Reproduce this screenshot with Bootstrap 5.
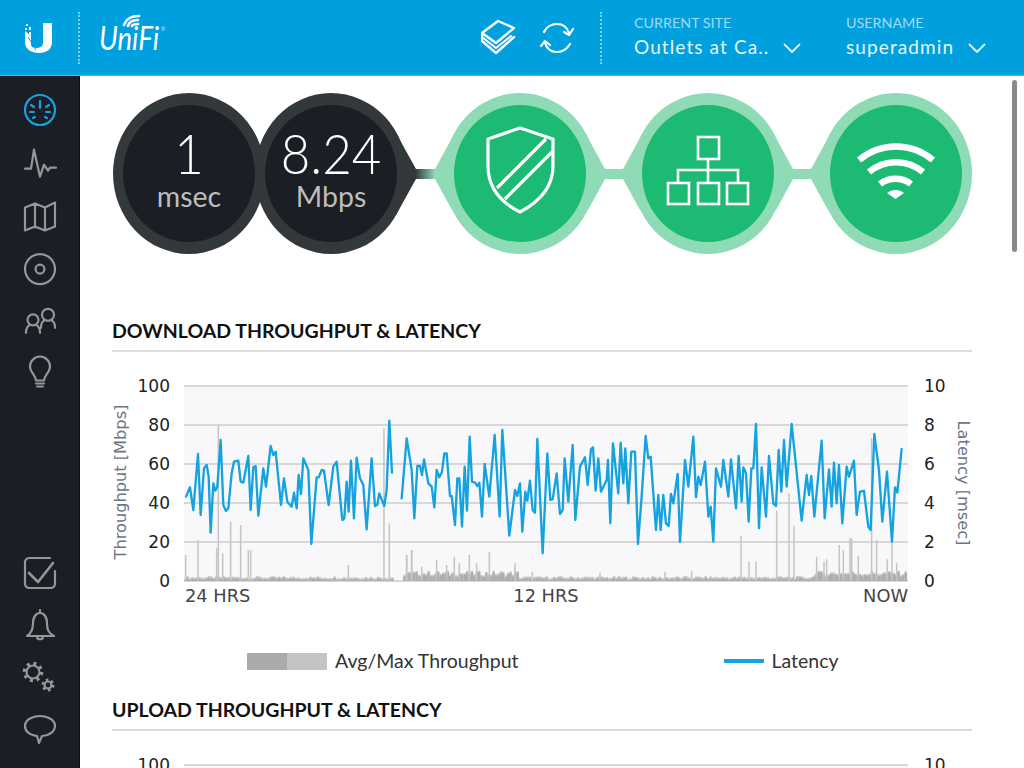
<!DOCTYPE html>
<html lang="en">
<head>
    <meta charset="UTF-8">
    <meta name="viewport" content="width=device-width, initial-scale=1.0">
    <title>UniFi Dashboard</title>
    <link href="https://cdn.jsdelivr.net/npm/bootstrap@5.3.0/dist/css/bootstrap.min.css" rel="stylesheet">
    <style>
        body { font-family: "Lato", sans-serif; color: #333; overflow: hidden; }
        .top-bar { height: 76px; background: #00a0df; border-bottom: 1px solid #4dbdea; }
        .dot-line { width: 0; height: 52px; border-left: 2px dotted #7fcfef; }
        .site-pick { color: #e3f5fc; line-height: 1; margin-bottom: 3px; }
        .site-pick .cap { font-size: 14.3px; color: #9fdaf4; margin-bottom: 6px; }
        .site-pick .val { font-size: 19px; letter-spacing: 1.1px; }
        .site-pick svg { margin-bottom: 3px; }
        .side-bar { width: 80px; background: #1b1e24; border-right: 1px solid #0b0c0f; padding: 8px 0 12px; }
        .side-item { height: 52.3px; }
        .side-item svg { width: 80px; height: 52px; fill: none; stroke: #8f9a98; stroke-width: 2.2; stroke-linecap: round; stroke-linejoin: round; }
        .main-pane { padding: 17px 52px 0 32px; }
        .status-row { height: 161px; }
        .status-bg { position: absolute; left: 0; top: 0; }
        .status-node { width: 152px; height: 161px; flex: none; border: 11px solid; border-width: 12px 10px; border-radius: 50%; position: relative; }
        .node-dark { background: #1b1e24; border-color: #33383b; color: #fff; line-height: 1; padding-bottom: 6.5px; }
        .node-green { background: #1cba72; border-color: #8fdbb6; }
        .node-green svg { fill: none; stroke: #fff; }
        .node-num { font-size: 51px; font-weight: 300; line-height: .9; margin-bottom: 6.5px; transform: scaleY(1.08); }
        .node-unit { font-size: 28.5px; color: #bdbdbd; font-weight: 400; }
        .sec-title { font-size: 19.5px; font-weight: 700; color: #111; line-height: 22px; margin: 0; padding-bottom: 8px; border-bottom: 2px solid #ddd; }
        .chart-box { display: block; margin-top: 18px; overflow: visible; }
        .legend-row { height: 20px; margin-top: 41px; font-size: 19.500px; color: #333; }
        .swatch-avg { width: 40px; height: 17px; background: #aaa; }
        .swatch-max { width: 40px; height: 17px; background: #c4c4c4; }
        .swatch-line { width: 40px; height: 4px; background: #15a3e0; }
        .ax { font-family: "DejaVu Sans", sans-serif; font-size: 17px; fill: #222; }
        .ax-x { font-family: "DejaVu Sans", sans-serif; font-size: 17.8px; fill: #444; }
        .ax-title { font-family: "DejaVu Sans", sans-serif; font-size: 16.2px; fill: #6d7488; }
        .scroll-thumb { position: absolute; right: 7px; top: 4px; width: 5px; height: 172px; background: #8a8a8a; border-radius: 3px; }
    </style>
</head>
<body>
<div class="d-flex flex-column vh-100 overflow-hidden">

    <header class="top-bar d-flex align-items-center flex-shrink-0">
        <div class="d-flex justify-content-center flex-shrink-0" style="width:78px">
            <svg width="32" height="34" viewBox="24 21 32 34">
                <path fill="#fff" d="M44 23h9v19c0 7-5 11-13 11s-14-4-14-11V31l6 5v7c0 2 0 3 1 4 6 2 11 1 11-5z"/>
                <path fill="none" stroke="#00a0df" d="M29 37l8 13"/>
                <g fill="#fff"><rect x="27" y="24" width="2" height="2"/><rect x="30" y="27" width="2" height="3"/><rect x="26" y="28" width="2" height="2"/><rect x="30" y="32" width="2" height="3"/></g>
            </svg>
        </div>
        <div class="dot-line"></div>
        <svg width="80" height="50" viewBox="95 12 80 50" class="ms-3 flex-shrink-0">
            <text x="98" y="49" font-family="Lato, sans-serif" font-style="italic" font-weight="400" font-size="32" fill="#fff" textLength="60" lengthAdjust="spacingAndGlyphs">UniFi</text>
            <g fill="none" stroke="#fff" stroke-width="2.6" stroke-linecap="round">
                <path d="M123 24c2-6 7-9 15-9"/><path d="M127 25c1-4 5-6 10-6"/><path d="M131 25c1-2 3-2 6-2"/>
            </g>
            <text x="160" y="30" font-family="Lato, sans-serif" font-size="5" fill="#cdeefb">®</text>
        </svg>

        <div class="d-flex align-items-center ms-auto">
            <svg width="38" height="38" viewBox="480 21 38 38" fill="none" stroke="#fff" stroke-width="2.4" stroke-linejoin="round" stroke-linecap="round">
                <path d="M481 35l16-12 16 7-18 15z"/><path d="M481 35v8l14 12 18-16"/><path stroke-width="2" d="M481 39l14 11 15-12"/>
            </svg>
            <svg style="margin-left:19px" width="38" height="34" viewBox="540 23 38 34" fill="none" stroke="#fff" stroke-width="2.2" stroke-linecap="round" stroke-linejoin="round">
                <path d="M546 34c3-6 8-8 13-8 6 0 10 3 12 9"/><path d="M566 34l5 3 4-6"/>
                <path d="M572 46c-3 5-8 8-13 8-6 0-10-3-12-9"/><path d="M552 47l-5-4-4 5"/>
            </svg>
            <div class="dot-line ms-4"></div>
            <div class="site-pick ms-4 ps-2 d-flex align-items-end">
                <div style="width:149px"><div class="cap">CURRENT SITE</div><div class="val">Outlets at Ca..</div></div>
                <svg width="18" height="10" viewBox="0 0 18 10" fill="none" stroke="#e3f5fc" stroke-width="1.8"><path d="M1 1l8 8 8-8"/></svg>
            </div>
            <div class="site-pick d-flex align-items-end" style="margin-left:45px;margin-right:38px">
                <div style="width:122px"><div class="cap">USERNAME</div><div class="val">superadmin</div></div>
                <svg width="18" height="10" viewBox="0 0 18 10" fill="none" stroke="#e3f5fc" stroke-width="1.8"><path d="M1 1l8 8 8-8"/></svg>
            </div>
        </div>
    </header>

    <div class="d-flex flex-grow-1 overflow-hidden">
        <aside class="side-bar d-flex flex-column justify-content-between flex-shrink-0">
            <div>
                <div class="side-item"><svg viewBox="0 84 80 52" style="stroke:#15a3e0">
                    <circle cx="40" cy="110" r="15"/>
                    <path d="M40 101v7M31 105l3 2M49 105l-3 2M30 112h4M50 112h-4M33 118l2-1M47 118l-2-1"/>
                </svg></div>
                <div class="side-item"><svg viewBox="0 136.300 80 52">
                    <path d="M25 169h6l3-19 6 27 4-12 4 6 2-3h6"/>
                </svg></div>
                <div class="side-item"><svg viewBox="0 188.600 80 52">
                    <path d="M25 207l10-4 10 4 10-5v24l-10 4-10-4-10 4zM35 203v24M45 207v23"/>
                </svg></div>
                <div class="side-item"><svg viewBox="0 240.900 80 52">
                    <circle cx="40" cy="269" r="15"/><circle cx="40" cy="269" r="4.5"/>
                </svg></div>
                <div class="side-item"><svg viewBox="0 293.200 80 52">
                    <circle cx="33" cy="320" r="5.5"/><circle cx="48" cy="315" r="6"/>
                    <path d="M26 333c0-4 2-7 4-8M40 333c0-4-2-7-4-8M41 328c0-3 1-6 3-7M55 328c0-3-1-6-3-7"/>
                </svg></div>
                <div class="side-item"><svg viewBox="0 345.500 80 52">
                    <path d="M36 381c0-5-6-8-6-14a10 10 0 0 1 20 0c0 6-6 9-6 14zM36 384h8M37 387h6"/>
                </svg></div>
            </div>
            <div>
                <div class="side-item"><svg viewBox="0 547 80 52">
                    <path d="M55 571v13c0 2-2 4-4 4H29c-2 0-4-2-4-4v-22c0-2 2-4 4-4h21"/><path stroke-width="2.6" d="M29 573l9 9 15-19"/>
                </svg></div>
                <div class="side-item"><svg viewBox="0 600 80 52">
                    <path d="M27 637c5-3 6-7 6-13 0-6 3-10 7-10s7 4 7 10c0 6 1 10 7 13zM40 611v3M37 638c0 3 6 3 6 0"/>
                </svg></div>
                <div class="side-item"><svg viewBox="0 652 80 52">
                    <circle cx="33" cy="673" r="6.5"/><circle cx="33" cy="673" r="8.5" stroke-width="3.6" stroke-dasharray="3 3.7" stroke-linecap="butt"/>
                    <circle cx="48" cy="686" r="3.5"/><circle cx="48" cy="686" r="5" stroke-width="3" stroke-dasharray="2.5 2.7" stroke-linecap="butt"/>
                </svg></div>
                <div class="side-item"><svg viewBox="0 704 80 52">
                    <path d="M40 716c8 0 15 4 15 10s-7 10-13 10l-3 7-2-7c-6-1-12-4-12-10s7-10 15-10z"/>
                </svg></div>
            </div>
        </aside>

        <main class="main-pane flex-grow-1 position-relative overflow-hidden">
            <div class="scroll-thumb"></div>

            <div class="status-row d-flex position-relative">
                <svg class="status-bg" width="860" height="161" viewBox="112 93 860 161">
                    <defs><linearGradient id="linkFade" x1="0" x2="1" y1="0" y2="0"><stop offset="0" stop-color="#33383b"/><stop offset=".35" stop-color="#33383b"/><stop offset=".8" stop-color="#8fdbb6"/></linearGradient></defs>
                    <rect x="400" y="169" width="44" height="10" fill="url(#linkFade)"/>
                    <path fill="#33383b" d="M396 133l20 36v10l-20 36z"/>
                    <g fill="#8fdbb6">
                        <path d="M452 138l-17 31v10l17 31z"/>
                        <path d="M588 138l17 31v10l-17 31z"/>
                        <path d="M640 138l-17 31v10l17 31z"/>
                        <path d="M776 138l17 31v10l-17 31z"/>
                        <path d="M828 138l-17 31v10l17 31z"/>
                        <rect x="600" y="169" width="30" height="10"/><rect x="785" y="169" width="30" height="10"/>
                    </g>
                </svg>
                <div class="status-node node-dark d-flex flex-column align-items-center justify-content-center" style="margin-left:1px">
                    <div class="node-num">1</div><div class="node-unit">msec</div>
                </div>
                <div class="status-node node-dark d-flex flex-column align-items-center justify-content-center" style="margin-left:-10px">
                    <div class="node-num">8.24</div><div class="node-unit">Mbps</div>
                </div>
                <div class="status-node node-green" style="margin-left:37px">
                    <svg class="d-block" width="132" height="137" viewBox="454 105 132 137" stroke-width="3.2">
                        <path stroke-linejoin="round" d="M488 139l32-11 33 11v27c0 22-14 36-33 46-18-9-32-24-32-46z"/>
                        <path d="M546 139l-49 49M553 151l-48 48"/>
                    </svg>
                </div>
                <div class="status-node node-green" style="margin-left:36px">
                    <svg class="d-block" width="132" height="137" viewBox="642 105 132 137" stroke-width="2.6">
                        <rect x="698" y="137" width="21" height="22"/>
                        <rect x="668" y="183" width="21" height="21"/><rect x="698" y="183" width="21" height="21"/><rect x="727" y="183" width="21" height="21"/>
                        <path d="M708 159v24M678 183v-13h60v13"/>
                    </svg>
                </div>
                <div class="status-node node-green" style="margin-left:36px">
                    <svg class="d-block" width="132" height="137" viewBox="830 105 132 137" stroke-width="6.5">
                        <path d="M859 160c22-18 52-18 74 0"/><path d="M869 172c16-13 38-13 54 0"/><path d="M880 184c9-7 22-7 31 0"/>
                        <path fill="#fff" stroke="none" d="M887 193c5-4 12-4 17 0l-8.500 6z"/>
                    </svg>
                </div>
            </div>

            <h2 class="sec-title" style="margin-top:66px">DOWNLOAD THROUGHPUT &amp; LATENCY</h2>
            <svg class="chart-box" width="860" height="240" viewBox="112 370 860 240">
                <rect x="184" y="386" width="724" height="195" fill="#f8f8fa"/>
                <g stroke="#cbcbcb" stroke-width="1.6">
                    <path d="M184 386h724M184 425h724M184 464h724M184 503h724M184 542h724M184 581h724"/>
                </g>
                <g id="bars"></g>
                <g fill="none" stroke="#c4c4c4" stroke-width="4.5">
                    <path transform="translate(100 370) scale(.3333)" d="M257 632V555M294 632V510M350 632V535M368 632V550M392 632V455M422 632V465M445 632V540M452 632V540M745 632V585M868 632V460M920 632V555M935 632V540"/>
                    <path transform="translate(400 370) scale(.3333)" d="M20 632V555M35 632V540M65 632V590M110 632V570M140 632V585M163 632V560M178 632V580M208 632V555M230 632V580M268 632V545M345 632V580M397 632V605M600 632V608M795 632V605M875 632V602"/>
                    <path transform="translate(680 370) scale(.3333)" d="M183 632V497M207 632V575M228 632V575M290 632V422M327 632V370M342 632V467M410 632V560M432 632V575M440 632V568M478 632V525M490 632V540M510 632V505M515 632V505M535 632V557M575 632V205M590 632V510M622 632V568M636 632V505M650 632V580"/>
                    <path transform="translate(100 370) scale(.3333)" d="M355 632V168M852 632V175"/>
                </g>
                <g fill="none" stroke="#15a3e0" stroke-width="7" stroke-linejoin="round" stroke-linecap="round">
                    <polyline transform="translate(100 370) scale(.3333)" points="258,380 270,352 280,420 294,252 302,435 312,295 320,285 326,320 332,488 340,340 346,362 352,350 362,210 370,405 378,423 385,415 395,310 402,275 415,272 422,335 430,338 445,258 452,420 460,292 467,288 475,437 490,295 498,350 512,228 520,255 527,245 543,405 552,325 562,395 575,410 582,368 590,415 596,315 603,372 610,265 625,300 634,522 650,322 656,322 665,300 672,302 686,405 700,290 710,275 727,450 733,445 740,335 746,425 753,272 762,445 770,263 780,325 790,345 800,478 815,265 825,408 832,405 838,370 853,408 860,360 868,152 876,308"/>
                    <polyline transform="translate(400 370) scale(.3333)" points="5,385 20,205 35,300 43,445 52,288 60,288 66,315 72,268 85,340 95,350 103,412 110,300 118,322 126,305 133,250 140,250 150,378 155,378 165,465 172,325 178,325 186,470 194,290 201,422 209,200 216,335 225,338 232,348 238,338 246,440 254,282 268,380 284,195 299,440 307,180 328,497 345,360 352,378 360,340 367,485 376,365 382,392 390,332 398,420 405,428 412,207 428,550 442,250 451,390 458,388 470,310 480,432 488,420 494,265 505,395 518,225 526,450 540,290 555,262 563,345 573,238 579,232 587,362 595,265 603,365 620,330 624,270 631,460 639,220 655,370 662,218 670,340 676,235 685,400 694,245 705,245 714,522 725,380 737,198 745,265 752,260 768,480 775,375 782,480 790,375 798,460 806,468 813,372 820,400 833,312 840,515"/>
                    <polyline transform="translate(680 370) scale(.3333)" points="0,515 15,270 25,350 40,200 48,382 55,320 62,345 75,275 85,440 92,410 100,515 108,295 123,350 130,270 145,380 153,268 168,415 176,258 185,395 190,292 198,310 206,455 214,295 220,295 228,162 237,475 245,292 258,440 267,258 280,400 288,408 296,240 304,365 312,210 320,350 335,162 365,452 380,315 387,375 394,318 403,440 425,212 434,445 447,298 455,410 462,278 470,400 477,285 487,460 500,290 507,320 522,272 530,435 540,365 552,363 565,470 572,480 583,192 597,300 607,455 621,305 636,515 645,352 652,368 665,237"/>
                </g>
                <g class="ax" text-anchor="end">
                    <text x="170" y="392">100</text><text x="170" y="431">80</text><text x="170" y="470">60</text><text x="170" y="509">40</text><text x="170" y="548">20</text><text x="170" y="587">0</text>
                </g>
                <g class="ax">
                    <text x="924" y="392">10</text><text x="924" y="431">8</text><text x="924" y="470">6</text><text x="924" y="509">4</text><text x="924" y="548">2</text><text x="924" y="587">0</text>
                </g>
                <text class="ax-x" x="185" y="602">24 HRS</text>
                <text class="ax-x" x="546" y="602" text-anchor="middle">12 HRS</text>
                <text class="ax-x" x="908" y="602" text-anchor="end">NOW</text>
                <text class="ax-title" transform="translate(126 482) rotate(-90)" text-anchor="middle">Throughput [Mbps]</text>
                <text class="ax-title" transform="translate(958 483) rotate(90)" text-anchor="middle">Latency [msec]</text>
            </svg>

            <div class="legend-row d-flex align-items-center">
                <div class="swatch-avg" style="margin-left:135px"></div><div class="swatch-max"></div>
                <span class="ms-2">Avg/Max Throughput</span>
                <div class="swatch-line" style="margin-left:205px"></div>
                <span class="ms-2">Latency</span>
            </div>

            <h2 class="sec-title" style="margin-top:28px">UPLOAD THROUGHPUT &amp; LATENCY</h2>
            <svg class="chart-box" width="860" height="240" viewBox="112 370 860 240">
                <rect x="184" y="386" width="724" height="195" fill="#f8f8fa"/>
                <path d="M184 386h724" stroke="#cbcbcb" stroke-width="1.6"/>
                <text class="ax" x="170" y="392" text-anchor="end">100</text>
                <text class="ax" x="924" y="392">10</text>
            </svg>
        </main>
    </div>
</div>

<script>
    // low bars along the bottom of the chart, avg on top of max
    var bars = '';
    function noise(i) { var n = Math.sin(i * 12.9898) * 43758.5453; return n - Math.floor(n); }
    for (var i = 0; i < 300; i++) {
        var x = 184 + i * 2.41;
        if (x > 393 && x < 401) continue;
        var busy = (x > 401 && x < 517) || (x > 813 && x < 905);
        var h = busy ? 4 + noise(i) * 5 : 1 + noise(i) * 2.5;
        bars += '<rect x="' + x + '" y="' + (581 - h - 1.5) + '" width="2.4" height="' + (h + 1.5) + '" fill="#c9c9c9"/>';
        bars += '<rect x="' + x + '" y="' + (581 - h) + '" width="2.4" height="' + h + '" fill="#adadad"/>';
    }
    document.getElementById('bars').innerHTML = bars;
</script>
<script src="https://cdn.jsdelivr.net/npm/bootstrap@5.3.0/dist/js/bootstrap.bundle.min.js"></script>
</body>
</html>
